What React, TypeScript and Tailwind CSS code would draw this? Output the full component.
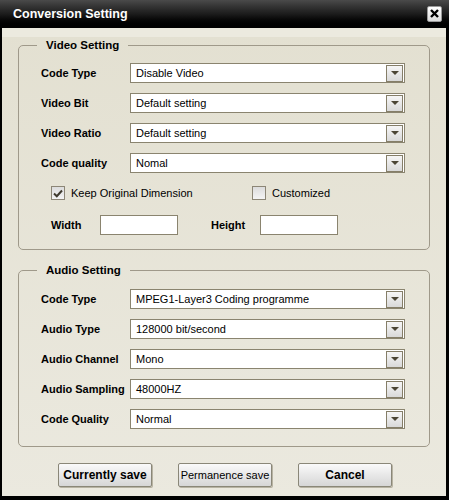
import React from 'react';

const font = { fontFamily: '"Liberation Sans", Arial, sans-serif' };

function Select({ value }: { value: string }) {
  return (
    <div className="flex h-[20px] w-[275px] items-center border border-[#8a846f] bg-white pl-[5px] pr-[1px]">
      <span className="flex-1 text-[11px] text-black leading-none">{value}</span>
      <div className="flex h-[17px] w-[17px] items-center justify-center border border-[#857e68] bg-gradient-to-b from-[#f6f6f6] to-[#d9d9d9]">
        <div className="h-0 w-0 border-x-[4px] border-t-[4px] border-x-transparent border-t-[#4b4535]" />
      </div>
    </div>
  );
}

function Row({ label, value }: { label: string; value: string }) {
  return (
    <div className="flex h-[20px] items-center">
      <span className="w-[89px] text-[11px] font-bold text-black">{label}</span>
      <Select value={value} />
    </div>
  );
}

function Checkbox({ checked }: { checked: boolean }) {
  return (
    <div className="flex h-[14px] w-[14px] items-center justify-center border border-[#8c8676] bg-gradient-to-b from-[#dcdcdc] to-[#f4f4f4]">
      {checked && (
        <svg width="10" height="9" viewBox="0 0 10 9">
          <path d="M1 4.5 L3.8 7.2 L9 1.5" fill="none" stroke="#3f3a2e" strokeWidth="2" />
        </svg>
      )}
    </div>
  );
}

function Button({ label, bold }: { label: string; bold?: boolean }) {
  return (
    <button
      className={`h-[24px] w-[94px] rounded-[2px] border border-[#8a8778] bg-gradient-to-b from-[#fafafa] via-[#e8e8e8] to-[#d6d6d6] text-black shadow-[1px_1px_0_#b7b3a3] ${bold ? 'text-[12px] font-bold' : 'text-[11px]'}`}
    >
      {label}
    </button>
  );
}

export default function App() {
  return (
    <div className="flex h-[500px] w-[449px] flex-col bg-black" style={font}>
      {/* title bar */}
      <div className="flex h-[28px] items-center justify-between bg-gradient-to-b from-[#4a4a4a] via-[#1c1c1c] to-black pl-[13px] pr-[7px]">
        <span className="text-[12.5px] font-bold text-white">Conversion Setting</span>
        <div className="mb-[1px] flex h-[16px] w-[15px] items-center justify-center rounded-[2px] border border-[#9a9a9a] bg-gradient-to-b from-white to-[#dcdcdc]">
          <svg width="9" height="9" viewBox="0 0 9 9">
            <path d="M1 1 L8 8 M8 1 L1 8" stroke="#000" strokeWidth="2.4" />
          </svg>
        </div>
      </div>

      {/* body */}
      <div className="flex flex-1 flex-col border-l-2 border-r-[3px] border-b-4 border-black bg-gradient-to-b from-[#e3e0d1] to-[#ebe9df]">
        <div className="h-[9px] bg-[#eceadf]" />

        {/* video group */}
        <fieldset className="ml-[16px] mt-[1px] w-[412px] rounded-[5px] border border-[#9f998a] pb-[14px]">
          <legend className="ml-[18px] px-[9px] text-[11.5px] font-bold leading-[14px] text-black">Video Setting</legend>
          <div className="pl-[22px]">
            <div className="mt-[11px] flex flex-col gap-[10px]">
              <Row label="Code Type" value="Disable Video" />
              <Row label="Video Bit" value="Default setting" />
              <Row label="Video Ratio" value="Default setting" />
              <Row label="Code quality" value="Nomal" />
            </div>
            <div className="mt-[13px] flex h-[14px] items-center pl-[10px] text-[11px] text-black">
              <Checkbox checked />
              <span className="ml-[6px] w-[181px]">Keep Original Dimension</span>
              <Checkbox checked={false} />
              <span className="ml-[6px]">Customized</span>
            </div>
            <div className="mt-[15px] flex h-[20px] items-center pl-[10px] text-[11px] font-bold text-black">
              <span className="w-[49px]">Width</span>
              <div className="h-[20px] w-[78px] border border-[#8a846f] bg-white" />
              <span className="ml-[33px] w-[49px]">Height</span>
              <div className="h-[20px] w-[78px] border border-[#8a846f] bg-white" />
            </div>
          </div>
        </fieldset>

        {/* audio group */}
        <fieldset className="ml-[16px] mt-[13px] w-[412px] rounded-[5px] border border-[#9f998a] pb-[17px]">
          <legend className="ml-[18px] px-[9px] text-[11.5px] font-bold leading-[14px] text-black">Audio Setting</legend>
          <div className="mt-[12px] flex flex-col gap-[10px] pl-[22px]">
            <Row label="Code Type" value="MPEG1-Layer3 Coding programme" />
            <Row label="Audio Type" value="128000 bit/second" />
            <Row label="Audio Channel" value="Mono" />
            <Row label="Audio Sampling" value="48000HZ" />
            <Row label="Code Quality" value="Normal" />
          </div>
        </fieldset>

        <div className="ml-[56px] mt-[16px] flex gap-[26px]">
          <Button label="Currently save" bold />
          <Button label="Permanence save" />
          <Button label="Cancel" bold />
        </div>
      </div>
    </div>
  );
}
